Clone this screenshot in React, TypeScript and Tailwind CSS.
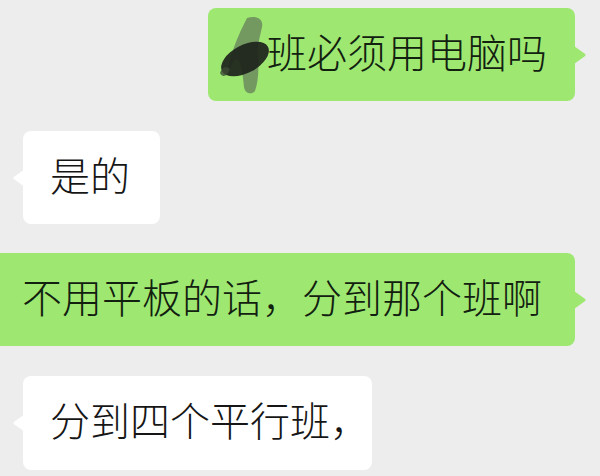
const font = "font-['Noto_Sans_CJK_SC','Noto_Sans',sans-serif]"

function TailRight() {
  return (
    <svg width="13" height="18" viewBox="0 0 13 18" className="absolute right-[-12px] top-1/2 -translate-y-1/2" fill="#9ee871">
      <path d="M0 0 L10.5 7.4 Q12.6 9 10.5 10.6 L0 18 Z" />
    </svg>
  )
}

function TailLeft() {
  return (
    <svg width="13" height="18" viewBox="0 0 13 18" className="absolute left-[-11px] top-1/2 -translate-y-1/2" fill="#ffffff">
      <path d="M13 0 L2.5 7.4 Q0.4 9 2.5 10.6 L13 18 Z" />
    </svg>
  )
}

function Scribble() {
  return (
    <svg width="52" height="80" viewBox="0 0 52 80" className="shrink-0 mr-[-2px] mt-[8px]">
      {/* light stroke */}
      <path
        d="M30 3 C38 0 47 3 45 12 C43 22 40 30 41 42 C42 56 41 68 38 76 C35 80 28 79 27 72 C26 62 25 52 22 46 C18 40 14 50 12 58 C10 52 16 30 30 3 Z"
        fill="#6b8b5e"
        opacity="0.85"
      />
      {/* dark blob */}
      <ellipse cx="28" cy="44" rx="26" ry="14" transform="rotate(-28 28 44)" fill="#1e231c" opacity="0.93" />
      <path d="M3 58 C5 52 9 50 13 54 C11 60 6 64 3 58 Z" fill="#3c4a36" opacity="0.8" />
    </svg>
  )
}

export default function App() {
  return (
    <div className={`w-[600px] h-[476px] overflow-hidden bg-[#ededed] ${font} pt-[8px] flex flex-col`}>
      {/* 1: sent */}
      <div className="flex justify-end pr-[25px]">
        <div className="relative w-[367px] h-[93px] rounded-[8px] bg-[#9ee871] flex items-center pl-[9px] pb-[8px] whitespace-nowrap text-[40px] font-light leading-none text-[#122010]">
          <Scribble />
          <span>班必须用电脑吗</span>
          <TailRight />
        </div>
      </div>

      {/* 2: received */}
      <div className="flex justify-start pl-[23px] mt-[30px]">
        <div className="relative w-[137px] h-[93px] rounded-[8px] bg-white flex items-center pl-[27px] pb-[8px] whitespace-nowrap text-[40px] font-light leading-none text-[#161616]">
          <span>是的</span>
          <TailLeft />
        </div>
      </div>

      {/* 3: sent */}
      <div className="flex justify-end pr-[25px] mt-[29px]">
        <div className="relative shrink-0 w-[583px] h-[93px] rounded-[8px] bg-[#9ee871] flex items-center pl-[30px] pb-[8px] whitespace-nowrap text-[40px] font-light leading-none text-[#122010]">
          <span>不用平板的话，分到那个班啊</span>
          <TailRight />
        </div>
      </div>

      {/* 4: received */}
      <div className="flex justify-start pl-[23px] mt-[30px]">
        <div className="relative w-[349px] h-[94px] rounded-[8px] bg-white flex items-center pl-[27px] pb-[8px] whitespace-nowrap text-[40px] font-light leading-none text-[#161616]">
          <span>分到四个平行班，</span>
          <TailLeft />
        </div>
      </div>
    </div>
  )
}
